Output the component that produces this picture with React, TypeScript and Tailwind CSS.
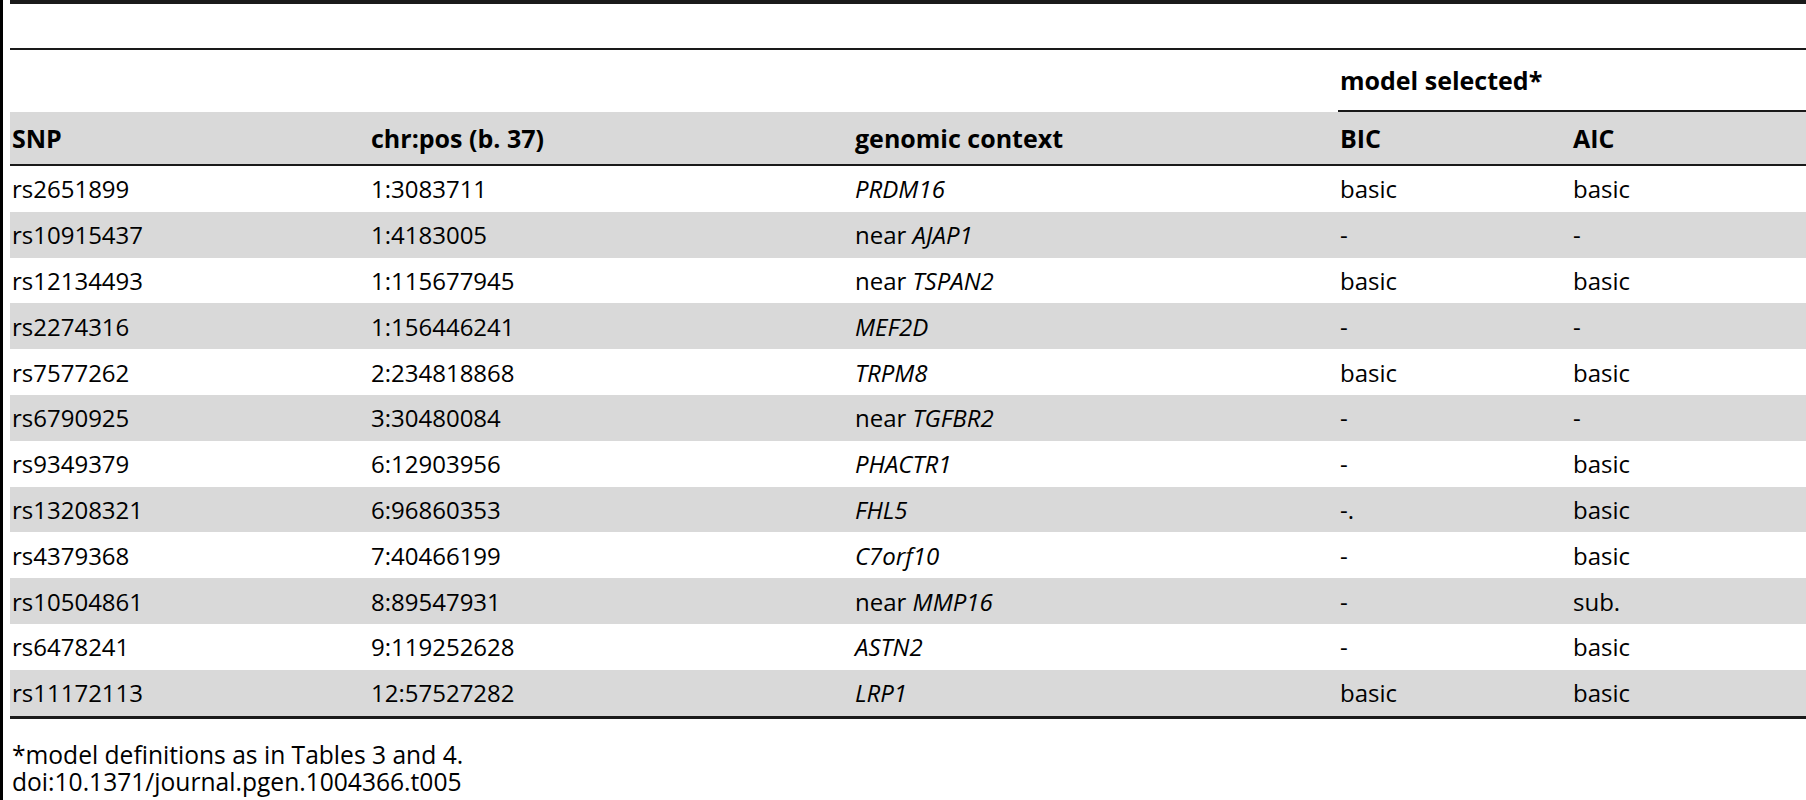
import React from "react";

type Row = { snp: string; pos: string; ctx: React.ReactNode; bic: string; aic: string };

const rows: Row[] = [
  { snp: "rs2651899", pos: "1:3083711", ctx: <i>PRDM16</i>, bic: "basic", aic: "basic" },
  { snp: "rs10915437", pos: "1:4183005", ctx: <>near <i>AJAP1</i></>, bic: "-", aic: "-" },
  { snp: "rs12134493", pos: "1:115677945", ctx: <>near <i>TSPAN2</i></>, bic: "basic", aic: "basic" },
  { snp: "rs2274316", pos: "1:156446241", ctx: <i>MEF2D</i>, bic: "-", aic: "-" },
  { snp: "rs7577262", pos: "2:234818868", ctx: <i>TRPM8</i>, bic: "basic", aic: "basic" },
  { snp: "rs6790925", pos: "3:30480084", ctx: <>near <i>TGFBR2</i></>, bic: "-", aic: "-" },
  { snp: "rs9349379", pos: "6:12903956", ctx: <i>PHACTR1</i>, bic: "-", aic: "basic" },
  { snp: "rs13208321", pos: "6:96860353", ctx: <i>FHL5</i>, bic: "-.", aic: "basic" },
  { snp: "rs4379368", pos: "7:40466199", ctx: <i>C7orf10</i>, bic: "-", aic: "basic" },
  { snp: "rs10504861", pos: "8:89547931", ctx: <>near <i>MMP16</i></>, bic: "-", aic: "sub." },
  { snp: "rs6478241", pos: "9:119252628", ctx: <i>ASTN2</i>, bic: "-", aic: "basic" },
  { snp: "rs11172113", pos: "12:57527282", ctx: <i>LRP1</i>, bic: "basic", aic: "basic" },
];

const cols = "grid grid-cols-[359px_484px_485px_233px_1fr]";

export default function App() {
  return (
    <div
      className="h-[800px] w-[1806px] overflow-hidden border-l-[3px] border-black bg-white pl-[7px] text-[24px] leading-[27px] text-black"
      style={{ fontFamily: '"Open Sans", "Noto Sans", sans-serif' }}
    >
      <div className="h-[48px] border-t-[4px] border-[#1a1a1a]" />
      <div className="border-t-[2px] border-[#1a1a1a]">
        <div className={`${cols} h-[62px]`}>
          <div />
          <div />
          <div />
          <div className="col-span-2 flex items-center border-b-[2px] border-[#1a1a1a] pl-[2px] text-[25px] font-bold">
            model selected*
          </div>
        </div>
        <div className={`${cols} h-[54px] items-center border-b-[2px] border-[#1a1a1a] bg-[#d9d9d9] text-[25px] font-bold`}>
          <div className="pl-[2px]">SNP</div>
          <div className="pl-[2px]">chr:pos (b. 37)</div>
          <div className="pl-[2px]">genomic context</div>
          <div className="pl-[2px]">BIC</div>
          <div className="pl-[2px]">AIC</div>
        </div>
        <div className="border-b-[3px] border-[#1a1a1a]">
          {rows.map((r, i) => (
            <div
              key={r.snp}
              className={`${cols} h-[45.8px] items-center ${i % 2 === 1 ? "bg-[#d9d9d9]" : "bg-white"}`}
            >
              <div className="pl-[2px]">{r.snp}</div>
              <div className="pl-[2px]">{r.pos}</div>
              <div className="pl-[2px]">{r.ctx}</div>
              <div className="pl-[2px]">{r.bic}</div>
              <div className="pl-[2px]">{r.aic}</div>
            </div>
          ))}
        </div>
      </div>
      <div className="mt-[22px] flex flex-col pl-[2px] text-[24.6px]">
        <div className="h-[27px] leading-[27px]">*model definitions as in Tables 3 and 4.</div>
        <div className="h-[27px] leading-[27px]">doi:10.1371/journal.pgen.1004366.t005</div>
      </div>
    </div>
  );
}
